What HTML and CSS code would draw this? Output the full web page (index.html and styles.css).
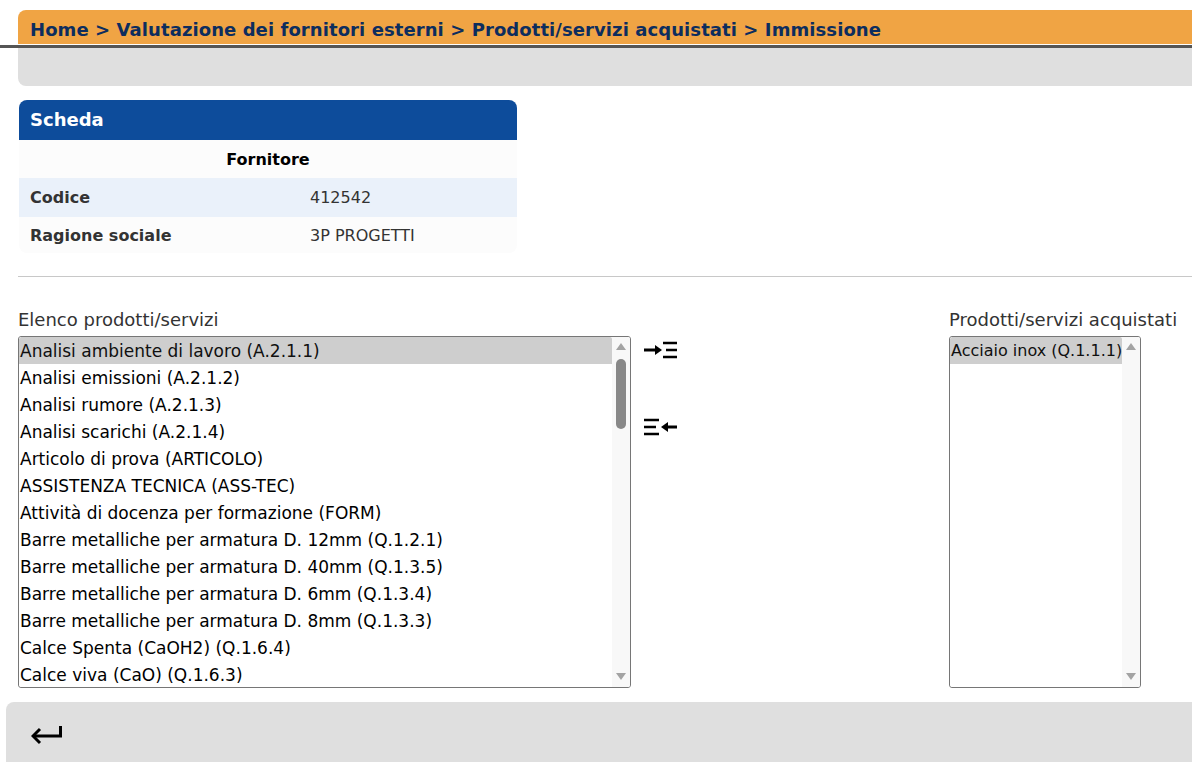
FILE: index.html
```html
<!doctype html>
<html lang="it">
	<head>
		<meta charset="utf-8">
		<title>Prodotti/servizi acquistati - Immissione</title>
		<link rel="stylesheet" href="styles.css">
	</head>
	<body>
		<div class="breadcrumb">Home &gt; Valutazione dei fornitori esterni &gt; Prodotti/servizi acquistati &gt; Immissione</div>
		<div class="rule"></div>
		<div class="toolbar"></div>

		<div class="scheda">
			<div class="scheda-title">Scheda</div>
			<div class="scheda-row head">Fornitore</div>
			<div class="scheda-row alt">
				<div class="key">Codice</div>
				<div class="val">412542</div>
			</div>
			<div class="scheda-row last">
				<div class="key">Ragione sociale</div>
				<div class="val">3P PROGETTI</div>
			</div>
		</div>

		<hr class="sep">

		<div class="picker">
			<div class="picker-col left">
				<label class="picker-label">Elenco prodotti/servizi</label>
				<div class="listbox">
					<select class="list" multiple>
						<option selected>Analisi ambiente di lavoro (A.2.1.1)</option>
						<option>Analisi emissioni (A.2.1.2)</option>
						<option>Analisi rumore (A.2.1.3)</option>
						<option>Analisi scarichi (A.2.1.4)</option>
						<option>Articolo di prova (ARTICOLO)</option>
						<option>ASSISTENZA TECNICA (ASS-TEC)</option>
						<option>Attività di docenza per formazione (FORM)</option>
						<option>Barre metalliche per armatura D. 12mm (Q.1.2.1)</option>
						<option>Barre metalliche per armatura D. 40mm (Q.1.3.5)</option>
						<option>Barre metalliche per armatura D. 6mm (Q.1.3.4)</option>
						<option>Barre metalliche per armatura D. 8mm (Q.1.3.3)</option>
						<option>Calce Spenta (CaOH2) (Q.1.6.4)</option>
						<option>Calce viva (CaO) (Q.1.6.3)</option>
						<option>Calcestruzzo C25/30 (Q.1.4.1)</option>
						<option>Calcestruzzo C28/35 (Q.1.4.2)</option>
						<option>Calcestruzzo C32/40 (Q.1.4.3)</option>
						<option>Calibrazione strumenti (T.1.1.1)</option>
						<option>Cavi elettrici (E.1.1.1)</option>
						<option>Cemento Portland (Q.1.5.1)</option>
						<option>Cemento pozzolanico (Q.1.5.2)</option>
						<option>Consulenza ambientale (A.3.1.1)</option>
						<option>Consulenza qualità (C.1.1.1)</option>
						<option>Consulenza sicurezza (S.1.1.1)</option>
						<option>Corsi antincendio (FORM-AI)</option>
						<option>Corsi primo soccorso (FORM-PS)</option>
						<option>Disinfestazione (A.4.1.1)</option>
						<option>Dispositivi di protezione individuale (S.2.1.1)</option>
						<option>Ghiaia (Q.1.7.1)</option>
						<option>Guanti da lavoro (S.2.1.2)</option>
						<option>Lamiere zincate (Q.1.1.2)</option>
						<option>Laterizi forati (Q.1.8.1)</option>
						<option>Laterizi pieni (Q.1.8.2)</option>
						<option>Manutenzione carrelli elevatori (M.1.1.1)</option>
						<option>Manutenzione impianti elettrici (M.1.2.1)</option>
						<option>Manutenzione impianti termici (M.1.3.1)</option>
						<option>Materiale di cancelleria (CANC)</option>
						<option>Noleggio attrezzature (N.1.1.1)</option>
						<option>Noleggio gru (N.1.1.2)</option>
						<option>Pulizia uffici (P.1.1.1)</option>
						<option>Pulizia cantiere (P.1.1.2)</option>
						<option>Reti elettrosaldate (Q.1.2.2)</option>
						<option>Sabbia (Q.1.7.2)</option>
						<option>Scarpe antinfortunistiche (S.2.1.3)</option>
						<option>Smaltimento rifiuti (A.5.1.1)</option>
						<option>Software gestionale (SW)</option>
						<option>Sorveglianza sanitaria (S.3.1.1)</option>
						<option>Taratura bilance (T.1.1.2)</option>
						<option>Trasporto materiali (TR.1.1.1)</option>
						<option>Travi in acciaio HEA (Q.1.1.3)</option>
						<option>Travi in acciaio IPE (Q.1.1.4)</option>
						<option>Tubi in PVC (Q.1.9.1)</option>
						<option>Vernici (Q.1.10.1)</option>
						<option>Verifica impianti di terra (V.1.1.1)</option>
						<option>Vigilanza (VIG)</option>
						<option>Visite mediche (S.3.1.2)</option>
					</select>
					<div class="scrollbar">
						<span class="sb-up"></span>
						<span class="sb-thumb"></span>
						<span class="sb-down"></span>
					</div>
				</div>
			</div>

			<div class="moves">
				<button class="move" title="Aggiungi">
					<svg width="36" height="20" viewBox="0 0 36 20">
						<path d="M0 10h12" stroke="#000" stroke-width="3"/>
						<path d="M11 5l7 5-7 5z" fill="#000"/>
						<path d="M19 3h14M22 10h11M19 17h14" stroke="#000" stroke-width="2.6"/>
					</svg>
				</button>
				<button class="move" title="Rimuovi">
					<svg width="36" height="20" viewBox="0 0 36 20">
						<path d="M0 3h15M0 10h12M0 17h15" stroke="#000" stroke-width="2.6"/>
						<path d="M23 10h10" stroke="#000" stroke-width="3"/>
						<path d="M24 5l-7 5 7 5z" fill="#000"/>
					</svg>
				</button>
			</div>

			<div class="picker-col right">
				<label class="picker-label">Prodotti/servizi acquistati</label>
				<div class="listbox">
					<select class="list" multiple>
						<option selected>Acciaio inox (Q.1.1.1)</option>
					</select>
					<div class="scrollbar">
						<span class="sb-up"></span>
						<span class="sb-down"></span>
					</div>
				</div>
			</div>
		</div>

		<div class="footer">
			<button class="back" title="Indietro">
				<svg width="32" height="20" viewBox="0 0 32 20">
					<path d="M29.5 0v10H2" fill="none" stroke="#000" stroke-width="3"/>
					<path d="M9 3l-7 7 7 7" fill="none" stroke="#000" stroke-width="3"/>
				</svg>
			</button>
		</div>
	</body>
</html>
```

FILE: styles.css
```css
body {
	margin: 0;
	background: #fff;
	color: #222;
	font-family: "DejaVu Sans", sans-serif;
	overflow: hidden;
}

.breadcrumb {
	margin: 10px 0 0 18px;
	height: 34px;
	line-height: 40px;
	padding-left: 12px;
	background: #f0a444;
	border-radius: 8px 0 0 0;
	border-bottom: 1px solid #fff;
	color: #0d2d5e;
	font-size: 18px;
	font-weight: 700;
	letter-spacing: 0.08px;
	white-space: nowrap;
}
.rule {
	height: 3px;
	background: #555;
}
.toolbar {
	margin-left: 18px;
	height: 38px;
	background: #dfdfdf;
	border-radius: 0 0 0 8px;
}

.scheda {
	width: 498px;
	margin: 14px 0 0 19px;
	font-size: 16px;
}
.scheda-title {
	height: 40px;
	line-height: 40px;
	padding-left: 11px;
	background: #0d4c9b;
	border-radius: 8px 8px 0 0;
	color: #fff;
	font-size: 18px;
	font-weight: 700;
}
.scheda-row {
	display: flex;
	align-items: center;
	height: 38px;
	padding-left: 11px;
	background: #fcfcfc;
}
.scheda-row.head {
	justify-content: center;
	padding-left: 0;
	font-weight: 700;
	color: #000;
}
.scheda-row.alt {
	height: 39px;
	background: #eaf1fa;
}
.scheda-row.last {
	height: 36px;
	border-radius: 0 0 8px 8px;
}
.scheda-row .key {
	width: 280px;
	font-weight: 700;
	color: #333;
}
.scheda-row .val {
	color: #333;
}

.sep {
	margin: 23px 0 0 18px;
	border: 0;
	border-top: 1px solid #c8c8c8;
}

.picker {
	display: flex;
	align-items: flex-start;
	margin: 33px 0 0 18px;
}
.picker-col {
	display: flex;
	flex-direction: column;
}
.picker-label {
	font-size: 18px;
	color: #333;
	margin-bottom: 6px;
	line-height: 20px;
}
.picker-col.left .listbox {
	width: 613px;
}
.picker-col.right .listbox {
	width: 192px;
}
.picker-col.right .list {
	font-size: 16px;
}

/* select + hand drawn scrollbar, side by side inside one border */
.listbox {
	display: flex;
	height: 352px;
	box-sizing: border-box;
	border: 1px solid #767676;
	border-radius: 3px;
	overflow: hidden;
}
.list {
	flex: 1;
	min-width: 0;
	margin: 0;
	padding: 0;
	border: 0;
	outline: none;
	font-family: inherit;
	font-size: 17px;
	color: #000;
	overflow: hidden;
	scrollbar-width: none;
}
.list option {
	padding: 4px 0 0 1px;
	height: 23px;
}
.scrollbar {
	display: flex;
	flex-direction: column;
	align-items: center;
	width: 18px;
	background: #f8f8f8;
}
.sb-up, .sb-down {
	width: 0;
	height: 0;
	border-left: 5px solid transparent;
	border-right: 5px solid transparent;
}
.sb-up {
	margin-top: 6px;
	border-bottom: 7px solid #a3a3a3;
}
.sb-down {
	margin: auto 0 7px;
	border-top: 7px solid #a3a3a3;
}
.sb-thumb {
	width: 10px;
	height: 70px;
	margin-top: 9px;
	border-radius: 5px;
	background: #888;
}

.moves {
	display: flex;
	flex-direction: column;
	align-items: flex-start;
	gap: 57px;
	width: 318px;
	padding: 30px 0 0 13px;
	box-sizing: border-box;
}
.move, .back {
	display: block;
	padding: 0;
	border: 0;
	background: none;
	line-height: 0;
	cursor: pointer;
}

.footer {
	margin: 14px 0 0 6px;
	height: 62px;
	padding: 24px 0 0 25px;
	box-sizing: border-box;
	background: #dfdfdf;
	border-radius: 8px 0 0 0;
}
```
